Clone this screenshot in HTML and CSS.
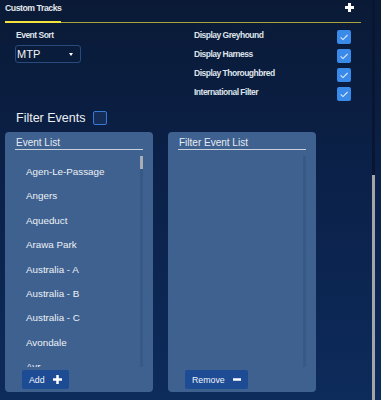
FILE: index.html
```html
<!DOCTYPE html>
<html lang="en">
<head>
    <meta charset="UTF-8">
    <meta name="viewport" content="width=device-width, initial-scale=1.0">
    <title>Custom Tracks</title>
    <link rel="stylesheet" href="styles.css">
</head>
<body>

    <div class="page">
        <div class="content">

            <!-- Header -->
            <div class="header">
                <div class="header-title">Custom Tracks</div>
                <svg class="header-add" width="9" height="9" viewBox="0 0 9 9">
                    <rect x="3" y="0" width="3" height="9" fill="#fff"/>
                    <rect x="0" y="3" width="9" height="3" fill="#fff"/>
                </svg>
            </div>
            <div class="tab-line">
                <div class="tab-line-active"></div>
                <div class="tab-line-rest"></div>
            </div>

            <!-- Settings -->
            <div class="settings">
                <div class="sort">
                    <div class="label sort-label">Event Sort</div>
                    <div class="select">
                        <span>MTP</span>
                        <span class="caret"></span>
                    </div>
                </div>

                <div class="toggles">
                    <div class="toggle-row">
                        <div class="label">Display Greyhound</div>
                        <div class="checkbox checked">
                            <svg width="14" height="14" viewBox="0 0 14 14"><path d="M3.6 7.4 L6 9.6 L10.6 5" fill="none" stroke="#dce8f8" stroke-width="1.1"/></svg>
                        </div>
                    </div>
                    <div class="toggle-row">
                        <div class="label">Display Harness</div>
                        <div class="checkbox checked">
                            <svg width="14" height="14" viewBox="0 0 14 14"><path d="M3.6 7.4 L6 9.6 L10.6 5" fill="none" stroke="#dce8f8" stroke-width="1.1"/></svg>
                        </div>
                    </div>
                    <div class="toggle-row">
                        <div class="label">Display Thoroughbred</div>
                        <div class="checkbox checked">
                            <svg width="14" height="14" viewBox="0 0 14 14"><path d="M3.6 7.4 L6 9.6 L10.6 5" fill="none" stroke="#dce8f8" stroke-width="1.1"/></svg>
                        </div>
                    </div>
                    <div class="toggle-row">
                        <div class="label">International Filter</div>
                        <div class="checkbox checked">
                            <svg width="14" height="14" viewBox="0 0 14 14"><path d="M3.6 7.4 L6 9.6 L10.6 5" fill="none" stroke="#dce8f8" stroke-width="1.1"/></svg>
                        </div>
                    </div>
                </div>
            </div>

            <!-- Filter events -->
            <div class="filter-row">
                <div class="filter-title">Filter Events</div>
                <div class="checkbox empty"></div>
            </div>

            <!-- Lists -->
            <div class="panels">
                <div class="panel">
                    <div class="panel-title">Event List</div>
                    <div class="list-box">
                        <div class="list">
                            <div class="list-item">Agen-Le-Passage</div>
                            <div class="list-item">Angers</div>
                            <div class="list-item">Aqueduct</div>
                            <div class="list-item">Arawa Park</div>
                            <div class="list-item">Australia - A</div>
                            <div class="list-item">Australia - B</div>
                            <div class="list-item">Australia - C</div>
                            <div class="list-item">Avondale</div>
                            <div class="list-item">Avr</div>
                        </div>
                        <div class="track"><div class="thumb"></div></div>
                    </div>
                    <button class="btn">
                        Add
                        <svg width="9" height="9" viewBox="0 0 9 9">
                            <rect x="3.25" y="0" width="2.5" height="9" fill="#fff"/>
                            <rect x="0" y="3.25" width="9" height="2.5" fill="#fff"/>
                        </svg>
                    </button>
                </div>

                <div class="panel">
                    <div class="panel-title">Filter Event List</div>
                    <div class="list-box">
                        <div class="list"></div>
                        <div class="track"></div>
                    </div>
                    <button class="btn">
                        Remove
                        <svg width="8" height="9" viewBox="0 0 8 9">
                            <rect x="0" y="3.25" width="8" height="2.5" fill="#fff"/>
                        </svg>
                    </button>
                </div>
            </div>

        </div>

        <!-- Page scrollbar -->
        <div class="rail">
            <div class="rail-top"></div>
            <div class="rail-thumb"></div>
        </div>
    </div>

</body>
</html>
```

FILE: styles.css
```css
body {
    margin: 0;
    font-family: "Liberation Sans", Arial, sans-serif;
    background: linear-gradient(180deg, #0a1a36 0%, #0b2149 45%, #0d2b5b 100%);
    color: #e6e9ef;
    height: 400px;
    overflow: hidden;
}

.page {
    display: flex;
    height: 400px;
}

.content {
    width: 372px;
}

/* Header */
.header {
    display: flex;
    justify-content: space-between;
    align-items: flex-start;
    height: 18px;
    padding-top: 3px;
    margin: 0 11px 0 5px;
}

.header-title {
    font-size: 8.7px;
    font-weight: bold;
    letter-spacing: -0.45px;
    line-height: 11px;
    color: #e4e7ec;
}

.header-add {
    margin-right: 7px;
    display: block;
}

.tab-line {
    display: flex;
    height: 2px;
    margin: 0 11px 0 5px;
}

.tab-line-active {
    width: 56px;
    height: 2px;
    background-color: #f4e33c;
}

.tab-line-rest {
    flex: 1;
    height: 1px;
    margin-top: 1px;
    background-color: #a9a33a;
}

/* Settings */
.settings {
    display: flex;
    padding: 7px 21px 0 15px;
}

.label {
    font-size: 8.5px;
    font-weight: bold;
    letter-spacing: -0.5px;
    line-height: 10px;
    color: #dfe3ea;
}

.sort {
    width: 179px;
}

.sort-label {
    padding-left: 1px;
}

.select {
    width: 63px;
    height: 16px;
    margin-top: 5px;
    border: 1px solid #284a7c;
    border-radius: 3px;
    display: flex;
    align-items: center;
    justify-content: space-between;
    font-size: 11px;
    color: #f2f4f7;
    padding-left: 1px;
    box-sizing: content-box;
}

.caret {
    width: 0;
    height: 0;
    border-left: 2.5px solid transparent;
    border-right: 2.5px solid transparent;
    border-top: 3px solid #fff;
    margin-right: 7px;
}

.toggles {
    flex: 1;
}

.toggle-row {
    display: flex;
    justify-content: space-between;
    align-items: flex-start;
    height: 19px;
}

.checkbox {
    width: 14px;
    height: 14px;
    border-radius: 2px;
    box-sizing: border-box;
}

.checkbox svg {
    display: block;
}

.checkbox.checked {
    background-color: #3a8aea;
}

.checkbox.empty {
    border: 1.5px solid #3a78d6;
    background-color: #132d58;
}

/* Filter events */
.filter-row {
    display: flex;
    align-items: center;
    gap: 8px;
    padding-left: 16px;
    margin-top: 5px;
    height: 14px;
}

.filter-title {
    font-size: 12.5px;
    color: #eef1f5;
}

/* Panels */
.panels {
    display: flex;
    gap: 15px;
    padding-left: 5px;
    margin-top: 7px;
}

.panel {
    width: 148px;
    height: 260px;
    box-sizing: border-box;
    background-color: #3e6190;
    border-radius: 4px;
    padding: 5px 10px 0 10px;
}

.panel-title {
    font-size: 10px;
    line-height: 12px;
    color: #e8ecf2;
    border-bottom: 1px solid #c8d0dc;
    padding-left: 1px;
}

.list-box {
    display: flex;
    height: 211px;
    margin-top: 6px;
    overflow: hidden;
}

.list {
    flex: 1;
    padding-top: 4px;
}

.list-item {
    height: 24.4px;
    line-height: 24.4px;
    font-size: 9.8px;
    color: #eef1f5;
    padding-left: 11px;
}

.track {
    width: 3px;
    background-color: #375985;
}

.thumb {
    height: 13px;
    background-color: #a9adb4;
}

.btn {
    display: flex;
    align-items: center;
    gap: 8px;
    height: 19px;
    margin: 3px 0 0 7px;
    padding: 0 7px;
    border: none;
    border-radius: 2px;
    background-color: #1d4c95;
    color: #f2f4f8;
    font-family: "Liberation Sans", Arial, sans-serif;
    font-size: 8.8px;
}

.btn svg {
    display: block;
}

/* Page scrollbar */
.rail {
    width: 3px;
    display: flex;
    flex-direction: column;
}

.rail-top {
    height: 175px;
    background-color: #081631;
}

.rail-thumb {
    flex: 1;
    background-color: #a3a4a6;
}
```
